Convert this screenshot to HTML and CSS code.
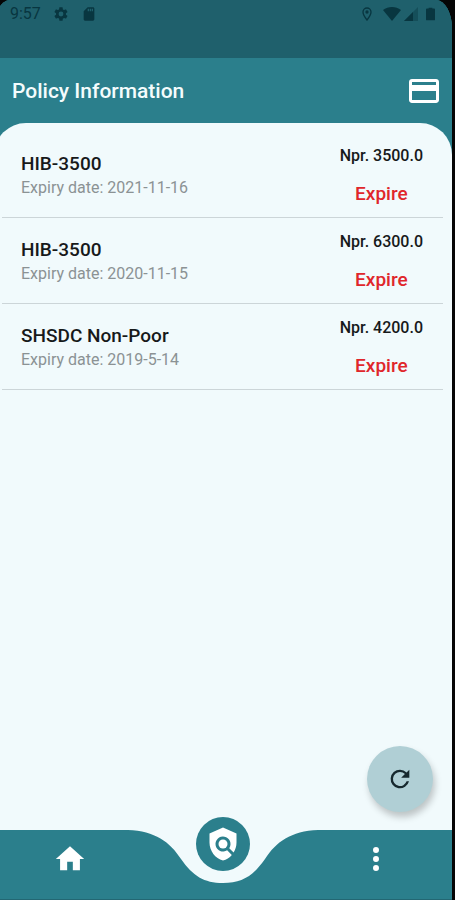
FILE: index.html
```html
<!DOCTYPE html>
<html lang="en">
<head>
<meta charset="utf-8">
<meta name="viewport" content="width=device-width, initial-scale=1">
<title>Policy Information</title>
<link rel="stylesheet" href="styles.css">
</head>
<body>
<div class="app">
  <div class="status">
    <div class="status-group">
      <span class="clock">9:57</span>
      <svg class="icon-16" viewBox="0 0 24 24" aria-hidden="true"><path fill="currentColor" fill-rule="evenodd" d="M19.4 13a7.500 7.500 0 0 0 0-2l2.100-1.600c.2-.2.3-.4.100-.7l-2-3.400c-.1-.2-.4-.3-.6-.2l-2.500 1c-.5-.4-1.100-.7-1.700-1L14.400 2.400c0-.2-.2-.4-.5-.4h-4c-.2 0-.4.2-.4.4L9.100 5.100c-.6.2-1.100.6-1.700 1l-2.500-1c-.2-.1-.5 0-.6.2l-2 3.400c-.1.200 0 .5.200.7L4.600 11a8 8 0 0 0 0 2l-2.100 1.600c-.2.200-.3.400-.2.700l2 3.400c.1.200.4.300.6.200l2.500-1c.5.400 1.100.7 1.700 1l.4 2.700c0 .200.200.400.400.400h4c.3 0 .5-.2.500-.4l.4-2.700c.6-.2 1.100-.6 1.700-1l2.500 1c.2.100.5 0 .6-.2l2-3.400c.1-.2.100-.5-.1-.7zM12 15.600a3.600 3.600 0 1 1 0-7.200 3.600 3.600 0 0 1 0 7.200z"/></svg>
      <svg class="icon-16" viewBox="0 0 24 24" aria-hidden="true"><path fill="currentColor" fill-rule="evenodd" d="M18 2h-8L4 8v12c0 1.100.9 2 2 2h12c1.100 0 2-.9 2-2V4c0-1.100-.9-2-2-2zm-6 6h-2V4h2zm3 0h-2V4h2zm3 0h-2V4h2z"/></svg>
    </div>
    <div class="status-group status-right">
      <svg class="icon-16" viewBox="0 0 24 24" aria-hidden="true"><path fill="none" stroke="currentColor" stroke-width="2" d="M12 21C8 16 6 12.500 6 9a6 6 0 0 1 12 0c0 3.500-2 7-6 12z"/><circle cx="12" cy="9" r="2.500" fill="currentColor"/></svg>
      <div class="status-group radios">
        <svg class="wifi" viewBox="0 0 18 14" aria-hidden="true"><path fill="currentColor" d="M9 14 0 3C5-1 13-1 18 3z"/></svg>
        <svg class="signal" viewBox="0 0 14 14" aria-hidden="true"><path fill="currentColor" opacity=".4" d="M0 14 14 0v14z"/><path fill="currentColor" d="M0 14 9 5v9z"/></svg>
      </div>
      <svg class="battery" viewBox="0 0 10 14" aria-hidden="true"><path fill="currentColor" d="M3 0h4v1h2q1 0 1 1v11q0 1-1 1H1q-1 0-1-1V2q0-1 1-1h2z"/></svg>
    </div>
  </div>

  <header class="bar">
    <h1>Policy Information</h1>
    <button class="plain" type="button" aria-label="Policy card">
      <svg class="icon-36" viewBox="0 0 24 24" aria-hidden="true"><path fill="currentColor" fill-rule="evenodd" d="M20 4H4c-1.110 0-2 .89-2 2v12c0 1.110.89 2 2 2h16c1.110 0 2-.89 2-2V6c0-1.110-.89-2-2-2zm0 14H4v-6h16zm0-10H4V6h16z"/></svg>
    </button>
  </header>

  <main class="sheet">
    <ul class="policies">
      <li>
        <div class="policy"><h2>HIB-3500</h2><p>Expiry date: 2021-11-16</p></div>
        <div class="amount"><span>Npr. 3500.0</span><strong>Expire</strong></div>
      </li>
      <li>
        <div class="policy"><h2>HIB-3500</h2><p>Expiry date: 2020-11-15</p></div>
        <div class="amount"><span>Npr. 6300.0</span><strong>Expire</strong></div>
      </li>
      <li>
        <div class="policy"><h2>SHSDC Non-Poor</h2><p>Expiry date: 2019-5-14</p></div>
        <div class="amount"><span>Npr. 4200.0</span><strong>Expire</strong></div>
      </li>
    </ul>
    <button class="refresh" type="button" aria-label="Refresh">
      <svg class="icon-28" viewBox="0 0 24 24" aria-hidden="true"><path fill="currentColor" d="M17.650 6.350A7.960 7.960 0 0 0 12 4a8 8 0 1 0 7.730 10h-2.080A6 6 0 1 1 12 6c1.660 0 3.140.69 4.220 1.780L13 11h7V4z"/></svg>
    </button>
  </main>

  <nav class="tabs" aria-label="Main">
    <svg class="notch" viewBox="0 0 190 54" aria-hidden="true"><path fill="currentColor" d="M0 0C27 1 42 12 53 29C65 46 76 53 95 53C114 53 125 46 137 29C148 12 163 1 190 0z"/></svg>
    <a href="#home" aria-label="Home"><svg class="icon-34" viewBox="0 0 24 24" aria-hidden="true"><path fill="currentColor" d="M10 20v-6h4v6h5v-8h3L12 3 2 12h3v8z"/></svg></a>
    <a class="current" href="#policy" aria-label="Policy" aria-current="page"><svg class="icon-36" viewBox="0 0 24 24" aria-hidden="true"><path fill="currentColor" d="M21 5l-9-4-9 4v6c0 5.550 3.840 10.740 9 12 2.300-.56 4.330-1.900 5.880-3.710l-3.120-3.120a5 5 0 1 1 1.410-1.410l2.900 2.900C20.290 15.690 21 13.380 21 11z"/><circle cx="12" cy="12" r="3" fill="currentColor"/></svg></a>
    <a href="#more" aria-label="More"><svg class="icon-36" viewBox="0 0 24 24" aria-hidden="true"><path fill="currentColor" d="M12 8a2 2 0 1 0 0-4 2 2 0 0 0 0 4zm0 2a2 2 0 1 0 0 4 2 2 0 0 0 0-4zm0 6a2 2 0 1 0 0 4 2 2 0 0 0 0-4z"/></svg></a>
  </nav>
</div>
</body>
</html>
```
FILE: styles.css
```css
* {
  box-sizing: border-box;
}

body {
  margin: 0;
  overflow: hidden;
  background: #050505;
  font-family: Roboto, "Liberation Sans", sans-serif;
}

h1, h2, p, ul {
  margin: 0;
  padding: 0;
}

svg {
  display: block;
}

.app {
  display: flex;
  flex-direction: column;
  min-height: 100vh;
  margin: 0 3px 0 -6px;
  overflow: hidden;
  border-radius: 16px 16px 0 0 / 28px 28px 0 0;
  background: #2b7f8c;
}

.icon-16 { width: 16px; height: 16px; }
.icon-28 { width: 28px; height: 28px; }
.icon-34 { width: 34px; height: 34px; }
.icon-36 { width: 36px; height: 36px; }
.wifi { width: 18px; height: 14px; }
.signal { width: 14px; height: 14px; }
.battery { width: 9px; height: 14px; }

.status {
  display: flex;
  justify-content: space-between;
  height: 58px;
  padding: 6px 17px 0 16px;
  background: #1f606c;
  color: #083640;
}

.status-group {
  display: flex;
  align-items: center;
  gap: 12px;
  height: 16px;
}

.status-right {
  gap: 8px;
}

.radios {
  gap: 3px;
}

.clock {
  font-size: 16px;
  line-height: 16px;
}

.bar {
  display: flex;
  align-items: center;
  justify-content: space-between;
  height: 65px;
  padding: 0 10px 0 18px;
  color: #f4fcfd;
}

.bar h1 {
  font-size: 21px;
  line-height: 24px;
  font-weight: 500;
}

.plain {
  padding: 0;
  border: 0;
  background: none;
  color: #fff;
}

.sheet {
  position: relative;
  flex: 1;
  padding: 9px 9px 0 8px;
  border-radius: 32px 32px 0 0;
  background: #f1fafc;
}

.policies {
  list-style: none;
}

.policies li {
  display: flex;
  justify-content: space-between;
  height: 86px;
  padding: 0 20px 0 19px;
  border-bottom: 1px solid #ccd5d8;
}

.policy {
  padding-top: 20px;
}

.policy h2 {
  color: #17191a;
  font-size: 19px;
  line-height: 24px;
  font-weight: 500;
}

.policy p {
  color: #8b9294;
  font-size: 16px;
  line-height: 24px;
}

.amount {
  display: flex;
  flex-direction: column;
  align-items: center;
  gap: 14px;
  padding-top: 12px;
  color: #17191a;
  font-size: 16px;
  line-height: 24px;
  font-weight: 500;
}

.amount strong {
  color: #e0262b;
  font-size: 19px;
  font-weight: 500;
}

.refresh {
  position: absolute;
  right: 19px;
  bottom: 18px;
  display: grid;
  place-items: center;
  width: 66px;
  height: 66px;
  padding: 0;
  border: 0;
  border-radius: 50%;
  background: #b0cfd5;
  color: #16282e;
  box-shadow: 2px 5px 7px rgba(0, 0, 0, 0.22);
}

.tabs {
  position: relative;
  display: grid;
  grid-template-columns: repeat(3, 1fr);
  justify-items: center;
  align-items: center;
  height: 70px;
  padding-bottom: 11px;
  border-bottom: 1px solid #236773;
  color: #fff;
}

.tabs a {
  color: inherit;
}

.notch {
  position: absolute;
  top: 0;
  left: 50%;
  width: 190px;
  height: 54px;
  margin-left: -95px;
  color: #f1fafc;
}

.tabs .current {
  position: relative;
  display: grid;
  place-items: center;
  width: 54px;
  height: 54px;
  margin-top: -30px;
  border-radius: 50%;
  background: #2b7f8c;
}
```
